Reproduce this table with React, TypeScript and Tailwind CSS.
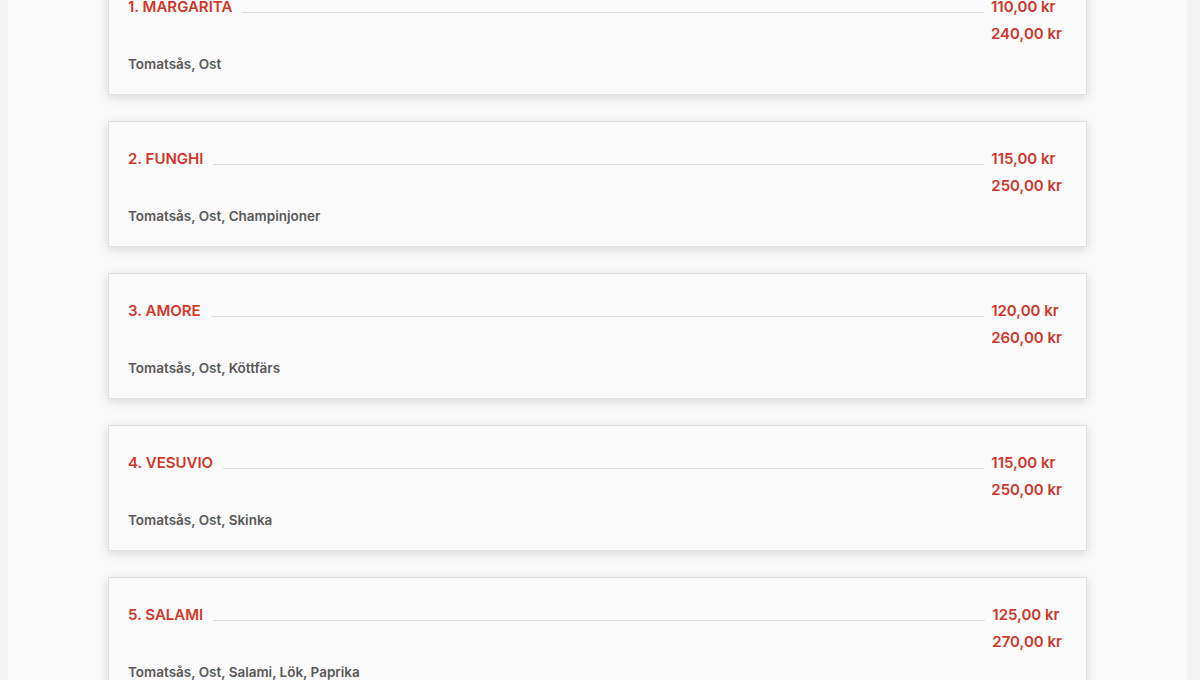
import React from "react"

type Pizza = {
  name: string
  prices: string[]
  ingredients: string
}

const pizzas: Pizza[] = [
  { name: "1. MARGARITA", prices: ["110,00 kr", "240,00 kr"], ingredients: "Tomatsås, Ost" },
  { name: "2. FUNGHI", prices: ["115,00 kr", "250,00 kr"], ingredients: "Tomatsås, Ost, Champinjoner" },
  { name: "3. AMORE", prices: ["120,00 kr", "260,00 kr"], ingredients: "Tomatsås, Ost, Köttfärs" },
  { name: "4. VESUVIO", prices: ["115,00 kr", "250,00 kr"], ingredients: "Tomatsås, Ost, Skinka" },
  { name: "5. SALAMI", prices: ["125,00 kr", "270,00 kr"], ingredients: "Tomatsås, Ost, Salami, Lök, Paprika" },
  { name: "6. HAWAII", prices: ["120,00 kr", "260,00 kr"], ingredients: "Tomatsås, Ost, Skinka, Ananas" },
]

function MenuCard({ pizza }: { pizza: Pizza }) {
  return (
    <div className="border border-[#e0e0e0] bg-[#fafafa] pl-[19px] pr-6 pt-[28px] pb-[22px] shadow-[0_3px_10px_rgba(0,0,0,0.12)]">
      <div className="flex items-start">
        <h3 className="text-[15px] leading-[18px] font-semibold text-[#d0372a] whitespace-nowrap">
          {pizza.name}
        </h3>
        {/* leader rule between name and prices */}
        <div className="flex-1 h-px bg-[#dcdcdc] mt-[14px] ml-[10px] mr-[7px]" />
        <div className="flex flex-col gap-[9px]">
          {pizza.prices.map((p) => (
            <span key={p} className="text-[15px] leading-[18px] font-semibold text-[#d0372a] whitespace-nowrap">
              {p}
            </span>
          ))}
        </div>
      </div>
      <p className="mt-[13px] text-[13.5px] leading-4 font-semibold text-[#585858]">{pizza.ingredients}</p>
    </div>
  )
}

export default function App() {
  return (
    <div
      className="h-[680px] overflow-hidden bg-[#f3f3f3] pl-2 pr-[13px]"
      style={{ fontFamily: "Inter, 'Liberation Sans', sans-serif" }}
    >
      <div className="h-full flex flex-col bg-[#f9f9f9] px-[100px]">
        <div className="-mt-[31px] flex flex-col gap-[26px]">
          {pizzas.map((pizza) => (
            <MenuCard key={pizza.name} pizza={pizza} />
          ))}
        </div>
      </div>
    </div>
  )
}
